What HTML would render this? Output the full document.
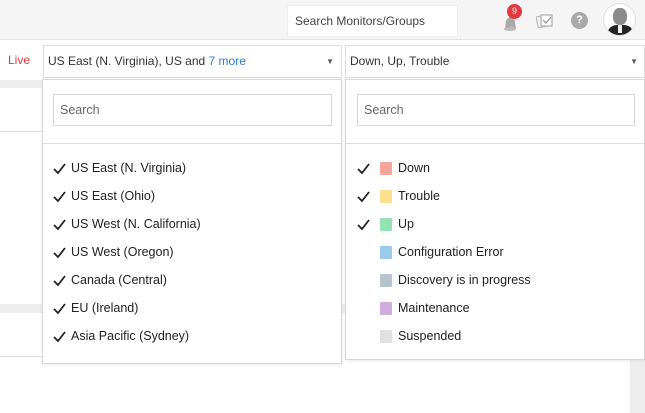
<!DOCTYPE html>
<html><head><style>
*{box-sizing:border-box;margin:0;padding:0}
body{width:645px;height:413px;overflow:hidden;background:#fff;font-family:"Liberation Sans",sans-serif;font-size:12px;color:#333;position:relative}
.abs{position:absolute;white-space:nowrap}
.hdr{left:0;top:0;width:645px;height:40px;background:#f5f5f5;border-bottom:1px solid #e2e2e2}
.box{background:#fff;border:1px solid #ddd}
.item{position:absolute;white-space:nowrap;height:20px;line-height:20px;font-size:12.5px;color:#222}
.chk{position:absolute;width:13px;height:12px}
.sw{position:absolute;width:12px;height:13px;border-radius:1px}
</style></head><body>
<div class="abs hdr"></div>
<div class="abs" style="left:287px;top:5px;width:171px;height:32px;background:#fff;border:1px solid #eee;line-height:30px;padding-left:7px;font-size:12px;color:#444">Search Monitors/Groups</div>
<svg class="abs" style="left:502px;top:13px" width="16" height="20" viewBox="0 0 16 20"><path d="M3 16 L4 8 Q6 3 10 4 Q13 6 13 10 L14 16 Z" fill="#aaa"/><ellipse cx="8" cy="16" rx="6" ry="2" fill="#bbb"/></svg>
<div class="abs" style="left:507px;top:4px;width:15px;height:15px;border-radius:50%;background:#e5383e;color:#fff;font-size:9px;text-align:center;line-height:15px">9</div>
<svg class="abs" style="left:536px;top:13px" width="18" height="16" viewBox="0 0 18 16"><rect x="1" y="3" width="11" height="11" fill="none" stroke="#bbb" stroke-width="1.2" transform="rotate(-12 6 8)"/><rect x="5" y="2" width="11" height="11" fill="#fff" stroke="#aaa" stroke-width="1.2"/><path d="M7 7 L10 10 L15 4" fill="none" stroke="#999" stroke-width="1.3"/></svg>
<div class="abs" style="left:571px;top:12px;width:17px;height:17px;border-radius:50%;background:#a9a9a9;color:#fff;font-weight:bold;font-size:11px;text-align:center;line-height:17px">?</div>
<div class="abs" style="left:603px;top:3px;width:33px;height:33px;border-radius:50%;background:#fff;border:1px solid #ddd;overflow:hidden">
<div class="abs" style="left:9px;top:4px;width:14px;height:17px;border-radius:45%;background:#8a8a8a"></div>
<div class="abs" style="left:3px;top:21px;width:27px;height:16px;border-radius:10px 10px 0 0;background:#222"></div>
<div class="abs" style="left:14px;top:21px;width:4px;height:8px;background:#eee"></div></div>
<div class="abs" style="left:8px;top:53px;color:#e03a3a;font-size:12px">Live</div>
<div class="abs" style="left:0;top:80px;width:42px;height:8px;background:#eee"></div>
<div class="abs" style="left:0;top:131px;width:42px;height:1px;background:#ddd"></div>
<div class="abs" style="left:0;top:304px;width:42px;height:9px;background:#eee"></div>
<div class="abs" style="left:342px;top:304px;width:4px;height:9px;background:#eee"></div>
<div class="abs" style="left:0;top:356px;width:42px;height:1px;background:#ddd"></div>
<div class="abs" style="left:630px;top:359px;width:15px;height:54px;background:#eee"></div>
<div class="abs box" style="left:43px;top:45px;width:299px;height:33px;line-height:31px;padding-left:4px;font-size:12px">US East (N. Virginia), US and <span style="color:#2a7fd4">7 more</span><span class="abs" style="right:7px;top:0;font-size:8px;color:#555">▼</span></div>
<div class="abs box" style="left:345px;top:45px;width:300px;height:33px;line-height:31px;padding-left:4px;font-size:12px">Down, Up, Trouble<span class="abs" style="right:6px;top:0;font-size:8px;color:#555">▼</span></div>
<div class="abs box" style="left:42px;top:79px;width:300px;height:285px;border-color:#d8d8d8;box-shadow:0 1px 3px rgba(0,0,0,.08)">
<div class="abs box" style="left:10px;top:14px;width:279px;height:32px;border-color:#d6d6d6;line-height:30px;padding-left:6px;font-size:12.5px;color:#666">Search</div>
<div class="abs" style="left:0;top:63px;width:298px;height:1px;background:#ddd"></div>
</div>
<div class="abs box" style="left:345px;top:79px;width:300px;height:281px;border-color:#d8d8d8;box-shadow:0 1px 3px rgba(0,0,0,.08)">
<div class="abs box" style="left:11px;top:14px;width:278px;height:32px;border-color:#d6d6d6;line-height:30px;padding-left:6px;font-size:12.5px;color:#666">Search</div>
<div class="abs" style="left:0;top:63px;width:298px;height:1px;background:#ddd"></div>
</div>
<div class="abs" style="left:0;top:0;width:645px;height:413px">
<svg class="chk" style="left:53px;top:163px" viewBox="0 0 13 12"><path d="M1 6 L5 10 L12 1" fill="none" stroke="#222" stroke-width="1.8"/></svg><div class="item" style="left:71px;top:158px">US East (N. Virginia)</div>
<svg class="chk" style="left:53px;top:191px" viewBox="0 0 13 12"><path d="M1 6 L5 10 L12 1" fill="none" stroke="#222" stroke-width="1.8"/></svg><div class="item" style="left:71px;top:186px">US East (Ohio)</div>
<svg class="chk" style="left:53px;top:219px" viewBox="0 0 13 12"><path d="M1 6 L5 10 L12 1" fill="none" stroke="#222" stroke-width="1.8"/></svg><div class="item" style="left:71px;top:214px">US West (N. California)</div>
<svg class="chk" style="left:53px;top:247px" viewBox="0 0 13 12"><path d="M1 6 L5 10 L12 1" fill="none" stroke="#222" stroke-width="1.8"/></svg><div class="item" style="left:71px;top:242px">US West (Oregon)</div>
<svg class="chk" style="left:53px;top:275px" viewBox="0 0 13 12"><path d="M1 6 L5 10 L12 1" fill="none" stroke="#222" stroke-width="1.8"/></svg><div class="item" style="left:71px;top:270px">Canada (Central)</div>
<svg class="chk" style="left:53px;top:303px" viewBox="0 0 13 12"><path d="M1 6 L5 10 L12 1" fill="none" stroke="#222" stroke-width="1.8"/></svg><div class="item" style="left:71px;top:298px">EU (Ireland)</div>
<svg class="chk" style="left:53px;top:331px" viewBox="0 0 13 12"><path d="M1 6 L5 10 L12 1" fill="none" stroke="#222" stroke-width="1.8"/></svg><div class="item" style="left:71px;top:326px">Asia Pacific (Sydney)</div>

<svg class="chk" style="left:357px;top:163px" viewBox="0 0 13 12"><path d="M1 6 L5 10 L12 1" fill="none" stroke="#222" stroke-width="1.8"/></svg>
<svg class="chk" style="left:357px;top:191px" viewBox="0 0 13 12"><path d="M1 6 L5 10 L12 1" fill="none" stroke="#222" stroke-width="1.8"/></svg>
<svg class="chk" style="left:357px;top:219px" viewBox="0 0 13 12"><path d="M1 6 L5 10 L12 1" fill="none" stroke="#222" stroke-width="1.8"/></svg>
<div class="sw" style="left:380px;top:162px;background:#f4a59c"></div><div class="item" style="left:398px;top:158px">Down</div>
<div class="sw" style="left:380px;top:190px;background:#fbe08e"></div><div class="item" style="left:398px;top:186px">Trouble</div>
<div class="sw" style="left:380px;top:218px;background:#94e4b3"></div><div class="item" style="left:398px;top:214px">Up</div>
<div class="sw" style="left:380px;top:246px;background:#98cbee"></div><div class="item" style="left:398px;top:242px">Configuration Error</div>
<div class="sw" style="left:380px;top:274px;background:#b6c5cd"></div><div class="item" style="left:398px;top:270px">Discovery is in progress</div>
<div class="sw" style="left:380px;top:302px;background:#cfaedd"></div><div class="item" style="left:398px;top:298px">Maintenance</div>
<div class="sw" style="left:380px;top:330px;background:#dfe1e3"></div><div class="item" style="left:398px;top:326px">Suspended</div>
</div>
</body></html>
